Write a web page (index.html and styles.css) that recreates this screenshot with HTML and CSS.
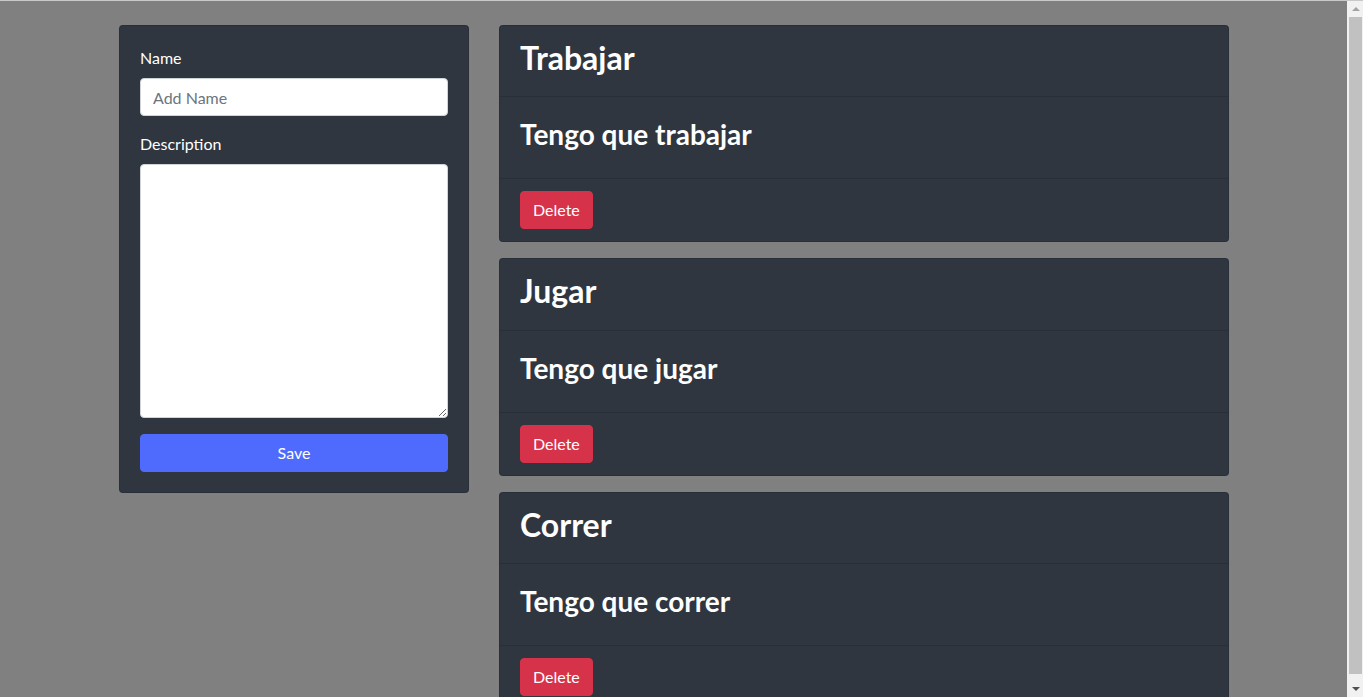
FILE: index.html
```html
<!DOCTYPE html>
<html lang="en">
<head>
<meta charset="utf-8">
<title>Tasks</title>
<link rel="stylesheet" href="styles.css">
</head>
<body>
<div class="page">
  <div class="container">
    <div class="row">
      <div class="col-side">
        <div class="card">
          <form class="card-body">
            <div class="form-group">
              <label class="label" for="name">Name</label>
              <input id="name" class="input" type="text" placeholder="Add Name">
            </div>
            <div class="form-group">
              <label class="label" for="desc">Description</label>
              <textarea id="desc" class="input textarea" rows="10"></textarea>
            </div>
            <button type="button" class="btn btn-primary btn-block">Save</button>
          </form>
        </div>
      </div>
      <div class="col-main">
        <div class="card task">
          <div class="card-header"><h2 class="title">Trabajar</h2></div>
          <div class="card-body"><h3 class="desc">Tengo que trabajar</h3></div>
          <div class="card-footer"><button type="button" class="btn btn-danger">Delete</button></div>
        </div>
        <div class="card task">
          <div class="card-header"><h2 class="title">Jugar</h2></div>
          <div class="card-body"><h3 class="desc">Tengo que jugar</h3></div>
          <div class="card-footer"><button type="button" class="btn btn-danger">Delete</button></div>
        </div>
        <div class="card task">
          <div class="card-header"><h2 class="title">Correr</h2></div>
          <div class="card-body"><h3 class="desc">Tengo que correr</h3></div>
          <div class="card-footer"><button type="button" class="btn btn-danger">Delete</button></div>
        </div>
      </div>
    </div>
  </div>
</div>
<div class="scrollbar" aria-hidden="true">
  <div class="sb-btn sb-up"><span class="tri-up"></span></div>
  <div class="sb-track"><div class="sb-thumb"></div></div>
  <div class="sb-btn sb-down"><span class="tri-down"></span></div>
</div>
</body>
</html>
```
FILE: styles.css
```css
* { box-sizing: border-box; }

html, body { height: 100%; }

body {
  margin: 0;
  display: flex;
  overflow: hidden;
  background: #808080;
  color: #fff;
  font-family: "Lato", "Open Sans", sans-serif;
  font-size: 16px;
  line-height: 1.5;
  border-top: 1px solid #c9c9c9;
}

.page {
  flex: 1;
  min-width: 0;
  overflow: hidden;
  padding-left: 1px;
}

/* fake window scrollbar */
.scrollbar {
  flex: 0 0 16px;
  display: flex;
  flex-direction: column;
  background: #f1f1f1;
  margin-top: -1px;
}
.sb-btn {
  flex: 0 0 17px;
  display: flex;
  align-items: center;
  justify-content: center;
  padding-left: 1px;
}
.tri-up {
  width: 0; height: 0;
  border-left: 4px solid transparent;
  border-right: 4px solid transparent;
  border-bottom: 4px solid #a3a3a3;
}
.tri-down {
  width: 0; height: 0;
  border-left: 4px solid transparent;
  border-right: 4px solid transparent;
  border-top: 4px solid #505050;
}
.sb-track {
  flex: 1;
  padding: 0 1px 6px 2px;
  display: flex;
}
.sb-thumb {
  flex: 1;
  background: #c1c1c1;
}

.container {
  max-width: 1140px;
  margin: 0 auto;
  padding: 24px 15px 0;
}

.row {
  display: flex;
  margin: 0 -15px;
}

.col-side {
  flex: 0 0 33.3333%;
  max-width: 33.3333%;
  padding: 0 15px;
}

.col-main {
  flex: 0 0 66.6667%;
  max-width: 66.6667%;
  padding: 0 15px;
}

.card {
  background: #2f3640;
  border: 1px solid rgba(0, 0, 0, 0.125);
  border-radius: 4px;
}

.task { margin-bottom: 16px; }

.card-body {
  padding: 20px;
}

.card-header {
  padding: 12px 20px;
  border-bottom: 1px solid rgba(0, 0, 0, 0.125);
}

.card-footer {
  padding: 12px 20px;
  border-top: 1px solid rgba(0, 0, 0, 0.125);
}

.title {
  margin: 0 0 7px;
  padding-top: 1px;
  font-size: 32px;
  line-height: 38.4px;
  font-weight: 700;
}

.desc {
  margin: 0 0 7px;
  padding-top: 1px;
  font-size: 28px;
  line-height: 33px;
  font-weight: 700;
}

.form-group { margin-bottom: 16px; }

.label {
  display: inline-block;
  margin-bottom: 8px;
}

.input {
  display: block;
  width: 100%;
  height: 38px;
  padding: 6px 12px;
  font: inherit;
  color: #495057;
  background: #fff;
  border: 1px solid #ced4da;
  border-radius: 4px;
}

.input::placeholder { color: #6c757d; }

.textarea {
  height: auto;
  resize: vertical;
}

.btn {
  display: inline-block;
  padding: 6px 12px;
  font: inherit;
  line-height: 1.5;
  color: #fff;
  border: 1px solid transparent;
  border-radius: 4px;
  cursor: pointer;
}

.btn-block { display: block; width: 100%; }

.btn-primary { background: #4e6bfd; border-color: #4e6bfd; }

.btn-danger { background: #d6334a; border-color: #d6334a; }
```
